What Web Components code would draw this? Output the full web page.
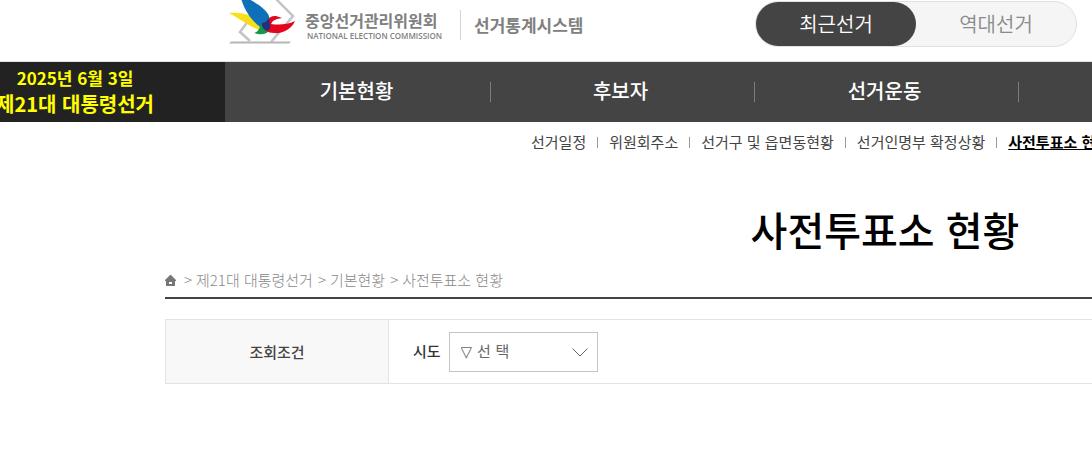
<!DOCTYPE html>
<html lang="ko">
<head>
<meta charset="utf-8">
<title>선거통계시스템</title>
<style>
    html {
        overflow: hidden;
    }
    body {
        margin: 0;
        background: #fff;
        color: #444;
        font-family: "Noto Sans CJK KR", "Noto Sans", sans-serif;
        font-size: 15px;
    }
</style>
</head>
<body>
<site-header>
    <site-logo></site-logo>
    <period-toggle></period-toggle>
</site-header>
<main-nav>
    <election-label slot="label" date="2025년 6월 3일" name="제21대 대통령선거"></election-label>
    <nav-item>기본현황</nav-item>
    <nav-item>후보자</nav-item>
    <nav-item>선거운동</nav-item>
    <nav-item></nav-item>
</main-nav>
<sub-nav>
    <sub-item>선거일정</sub-item>
    <sub-item>위원회주소</sub-item>
    <sub-item>선거구 및 읍면동현황</sub-item>
    <sub-item>선거인명부 확정상황</sub-item>
    <sub-item current>사전투표소 현황</sub-item>
</sub-nav>
<page-content>
    <page-title>사전투표소 현황</page-title>
    <bread-crumb>
        <bread-item>제21대 대통령선거</bread-item>
        <bread-item>기본현황</bread-item>
        <bread-item>사전투표소 현황</bread-item>
    </bread-crumb>
    <search-box heading="조회조건">
        <select-field label="시도" placeholder="▽ 선 택"></select-field>
    </search-box>
</page-content>

<script>
class BaseElement extends HTMLElement {
    constructor() {
        super();
        this.attachShadow({ mode: 'open' });
        const template = document.createElement('template');
        template.innerHTML = this.constructor.markup;
        this.shadowRoot.appendChild(template.content.cloneNode(true));
    }
}

class SiteHeader extends BaseElement {
    static markup = `
        <style>
            :host { display: block; }
            header {
                display: flex;
                align-items: flex-start;
                justify-content: space-between;
                height: 61px;
                padding: 0 15px 0 225px;
                border-bottom: 1px solid #e0e3e5;
            }
        </style>
        <header><slot></slot></header>
    `;
}
customElements.define('site-header', SiteHeader);

class SiteLogo extends BaseElement {
    static markup = `
        <style>
            :host { display: block; }
            a {
                display: flex;
                align-items: flex-start;
                color: #808080;
                text-decoration: none;
                white-space: nowrap;
            }
            svg { display: block; margin-right: 5px; }
            .org {
                display: flex;
                flex-direction: column;
                width: 155px;
                padding-top: 10px;
            }
            .ko { font-size: 16px; font-weight: 700; line-height: 20px; }
            .en {
                padding-left: 2px;
                font-family: "Open Sans", "Liberation Sans", sans-serif;
                font-size: 8px;
                font-weight: 600;
                line-height: 11px;
            }
            .system {
                margin-top: 10px;
                padding-left: 13px;
                border-left: 1px solid #d5d5d5;
                font-size: 17px;
                font-weight: 700;
                line-height: 30px;
            }
        </style>
        <a href="#">
            <svg width="75" height="48" viewBox="0 0 75 48" aria-hidden="true">
                <path d="M26 17L15 32L25 41M50 -2L68 16L46 42" stroke="#c4c4c8" stroke-width="2.500" fill="none"/>
                <path d="M6 41.500H66L64 43.500H4Z" fill="#b5b5b8"/>
                <path d="M4 13C16 12 30 15 39 23L37 30C26 29 18 20 4 13Z" fill="#f7e017"/>
                <path d="M16 -2H22C33 4 41 9 44 16C45 20 44 25 40 30C31 25 20 14 16 -2Z" fill="#0f70b9"/>
                <path d="M29 33C35 32 34 25 39 22L45 24C46 31 41 37 29 33Z" fill="#129a48"/>
                <path d="M40 30C39 21 45 15 51 16L57 18C51 19 48 20 46 24C53 25 62 25 70 21C67 29 57 34 49 33C45 33 42 32 40 30Z" fill="#e3071d"/>
                <path d="M37 23C40 23 43 20 44 18C44 22 47 27 44 30C41 32 36 28 37 23Z" fill="#25307d"/>
            </svg>
            <span class="org">
                <span class="ko">중앙선거관리위원회</span>
                <span class="en">NATIONAL ELECTION COMMISSION</span>
            </span>
            <span class="system">선거통계시스템</span>
        </a>
    `;
}
customElements.define('site-logo', SiteLogo);

class PeriodToggle extends BaseElement {
    static markup = `
        <style>
            :host { display: block; }
            div {
                display: flex;
                margin-top: 1px;
                border: 1px solid #e0e0e0;
                border-radius: 24px;
                background: #f5f5f5;
            }
            button {
                width: 160px;
                height: 44px;
                padding: 0;
                border: 0;
                border-radius: 22px;
                background: none;
                color: #8a8a8a;
                font-family: inherit;
                font-size: 20px;
                font-weight: 350;
                line-height: 44px;
            }
            button[aria-pressed="true"] { background: #444; color: #fff; }
        </style>
        <div>
            <button type="button" aria-pressed="true">최근선거</button>
            <button type="button" aria-pressed="false">역대선거</button>
        </div>
    `;
}
customElements.define('period-toggle', PeriodToggle);

class MainNav extends BaseElement {
    static markup = `
        <style>
            :host { display: block; background: #444; }
            nav {
                display: flex;
                height: 60px;
                overflow: hidden;
            }
            .menu { display: flex; flex: none; padding-left: 2px; }
        </style>
        <nav>
            <slot name="label"></slot>
            <div class="menu"><slot></slot></div>
        </nav>
    `;
}
customElements.define('main-nav', MainNav);

class ElectionLabel extends BaseElement {
    static markup = `
        <style>
            :host {
                display: flex;
                flex: none;
                flex-direction: column;
                align-items: center;
                width: 300px;
                margin-left: -75px;
                padding-top: 3px;
                box-sizing: border-box;
                background: #222;
                color: #ff0;
                font-weight: 700;
                white-space: nowrap;
            }
            .date { font-size: 17px; line-height: 25px; }
            .name { font-size: 20px; line-height: 28px; }
        </style>
        <span class="date"></span>
        <span class="name"></span>
    `;

    connectedCallback() {
        this.shadowRoot.querySelector('.date').textContent = this.getAttribute('date');
        this.shadowRoot.querySelector('.name').textContent = this.getAttribute('name');
    }
}
customElements.define('election-label', ElectionLabel);

class NavItem extends BaseElement {
    static markup = `
        <style>
            :host {
                display: flex;
                align-items: center;
                width: 264px;
            }
            a {
                flex: 1;
                height: 20px;
                padding-right: 4px;
                border-right: 1px solid #7c7c7c;
                color: #fff;
                font-size: 20px;
                font-weight: 500;
                line-height: 18px;
                text-align: center;
                text-decoration: none;
            }
        </style>
        <a href="#"><slot></slot></a>
    `;
}
customElements.define('nav-item', NavItem);

class SubNav extends BaseElement {
    static markup = `
        <style>
            :host { display: block; overflow: hidden; }
            nav { display: flex; padding: 9px 0 0 520px; }
        </style>
        <nav><slot></slot></nav>
    `;
}
customElements.define('sub-nav', SubNav);

class SubItem extends BaseElement {
    static markup = `
        <style>
            :host {
                display: flex;
                flex: none;
                align-items: center;
                height: 22px;
                white-space: nowrap;
            }
            :host(:not(:first-child))::before {
                content: "";
                height: 11px;
                border-left: 1px solid #999;
            }
            a {
                padding: 0 11px;
                color: #444;
                font-size: 15px;
                line-height: 22px;
                text-decoration: none;
            }
            :host([current]) a {
                color: #000;
                font-weight: 700;
                text-decoration: underline;
            }
        </style>
        <a href="#"><slot></slot></a>
    `;
}
customElements.define('sub-item', SubItem);

class PageContent extends BaseElement {
    static markup = `
        <style>
            :host { display: block; overflow: hidden; }
            main { min-width: 1440px; margin-left: 165px; }
        </style>
        <main><slot></slot></main>
    `;
}
customElements.define('page-content', PageContent);

class PageTitle extends BaseElement {
    static markup = `
        <style>
            :host { display: block; padding-top: 46px; }
            h1 {
                margin: 0;
                color: #000;
                font-size: 40px;
                font-weight: 500;
                line-height: 60px;
                text-align: center;
            }
        </style>
        <h1><slot></slot></h1>
    `;
}
customElements.define('page-title', PageTitle);

class BreadCrumb extends BaseElement {
    static markup = `
        <style>
            :host { display: block; }
            nav {
                display: flex;
                align-items: center;
                height: 34px;
                padding-top: 4px;
                border-bottom: 2px solid #444;
            }
            svg { display: block; margin-right: 3px; }
        </style>
        <nav>
            <a href="#" aria-label="홈">
                <svg width="11" height="11" viewBox="0 0 11 11">
                    <path fill="#777" fill-rule="evenodd" d="M5 0h1l5 5v1h-1v5H1V6H0V5zM4 7v2h3V7z"/>
                </svg>
            </a>
            <slot></slot>
        </nav>
    `;
}
customElements.define('bread-crumb', BreadCrumb);

class BreadItem extends BaseElement {
    static markup = `
        <style>
            :host {
                display: flex;
                gap: 4px;
                margin-left: 5px;
                color: #888;
                font-size: 15px;
                font-weight: 300;
                line-height: 22px;
            }
            a { color: inherit; text-decoration: none; }
        </style>
        <span>&gt;</span>
        <a href="#"><slot></slot></a>
    `;
}
customElements.define('bread-item', BreadItem);

class SearchBox extends BaseElement {
    static markup = `
        <style>
            :host { display: block; margin-top: 20px; }
            section {
                display: flex;
                border: 1px solid #e3e3e3;
            }
            h2 {
                display: flex;
                align-items: center;
                justify-content: center;
                width: 222px;
                margin: 0;
                border-right: 1px solid #e3e3e3;
                background: #f8f8f8;
                color: #444;
                font-size: 15px;
                font-weight: 500;
            }
            .fields { padding: 12px 24px 11px; }
        </style>
        <section>
            <h2></h2>
            <div class="fields"><slot></slot></div>
        </section>
    `;

    connectedCallback() {
        this.shadowRoot.querySelector('h2').textContent = this.getAttribute('heading');
    }
}
customElements.define('search-box', SearchBox);

class SelectField extends BaseElement {
    static markup = `
        <style>
            :host { display: flex; align-items: flex-start; gap: 8px; }
            label {
                color: #333;
                font-size: 15px;
                font-weight: 500;
                line-height: 37px;
            }
            .box {
                display: grid;
                align-items: center;
                width: 149px;
            }
            select, svg { grid-area: 1 / 1; }
            select {
                width: 100%;
                height: 40px;
                padding: 0 30px 0 11px;
                appearance: none;
                border: 1px solid #c4c4c4;
                border-radius: 0;
                background: #fff;
                color: #666;
                font-family: "DejaVu Sans", "Noto Sans CJK KR", sans-serif;
                font-size: 15px;
            }
            svg {
                justify-self: end;
                margin-right: 10px;
                pointer-events: none;
            }
        </style>
        <label for="field"></label>
        <div class="box">
            <select id="field"><option></option></select>
            <svg width="16" height="9" viewBox="0 0 16 9">
                <path d="M0.500 0.500L8 8L15.500 0.500" fill="none" stroke="#666"/>
            </svg>
        </div>
    `;

    connectedCallback() {
        this.shadowRoot.querySelector('label').textContent = this.getAttribute('label');
        this.shadowRoot.querySelector('option').textContent = this.getAttribute('placeholder');
    }
}
customElements.define('select-field', SelectField);
</script>
</body>
</html>
